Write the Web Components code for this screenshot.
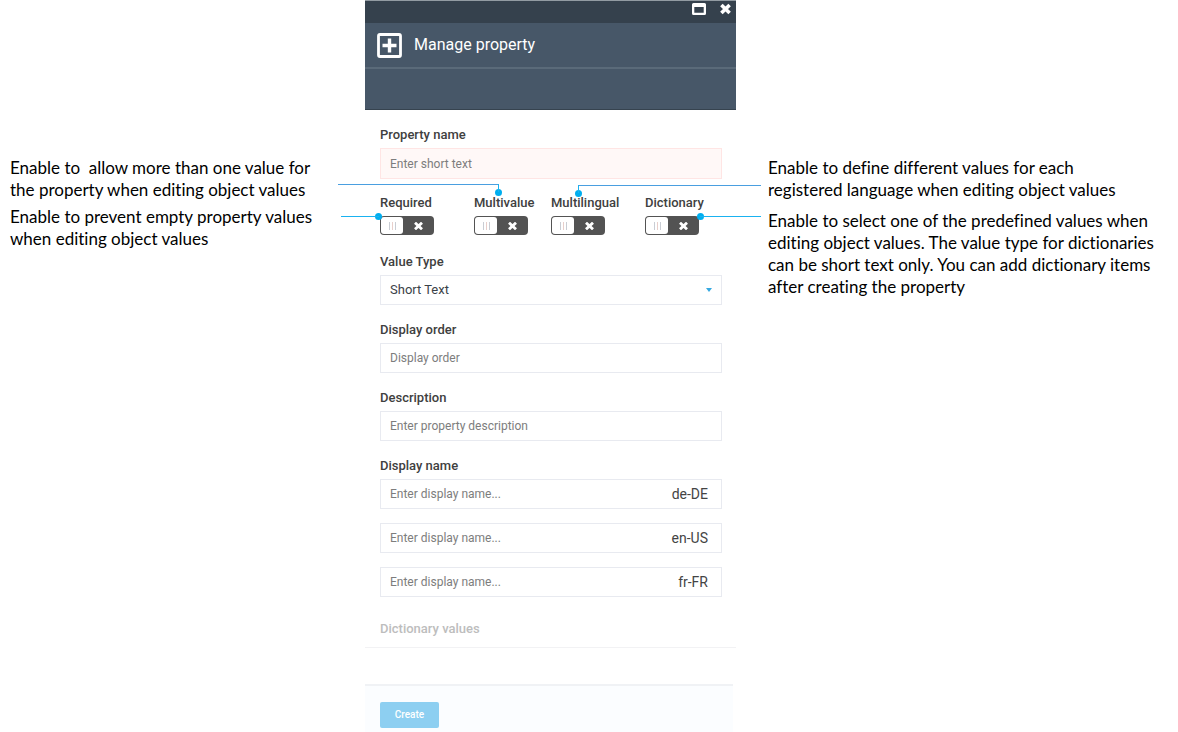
<!DOCTYPE html>
<html lang="en">
<head>
<meta charset="utf-8">
<title>Manage property</title>
<style>
  body { margin: 0; background: #fff; color: #000; font-family: Roboto, "Liberation Sans", sans-serif; }
</style>
</head>
<body>
<property-guide></property-guide>
<script>
function define(name, html, setup) {
  const template = document.createElement('template');
  template.innerHTML = html;
  customElements.define(name, class extends HTMLElement {
    constructor() {
      super();
      this.attachShadow({ mode: 'open' }).append(template.content.cloneNode(true));
    }
    connectedCallback() { if (setup) setup(this, this.shadowRoot); }
  });
}

/* A paragraph of explanatory text beside the panel */
define('guide-note', `
  <style>
    :host { display: block; font: 17px/22px Lato, "Liberation Sans", sans-serif; font-variant-ligatures: none; color: #000; }
    p { margin: 0; white-space: pre; }
  </style>
  <p><slot></slot></p>`);

/* Leader line: a dot with a rule running to the left or right */
define('leader-line', `
  <style>
    :host { position: absolute; width: 7px; height: 7px; border-radius: 50%; background: #00aeef; pointer-events: none; }
    i { position: absolute; background: #1ab2f0; }
    .h { height: 1px; top: 3px; width: var(--run); }
    .v { display: none; width: 1px; height: 8px; left: 3px; bottom: 4px; }
    :host([side=left]) .h { right: 3px; }
    :host([side=right]) .h { left: 3px; }
    :host([raised]) .h { top: -5px; background: #4a9fe0; }
    :host([raised]) .v { display: block; }
  </style>
  <i class="h"></i><i class="v"></i>`);

define('panel-header', `
  <style>
    :host { display: block; color: #fff; background: #475768; border-bottom: 1px solid #36434f; }
    .bar { display: flex; justify-content: flex-end; align-items: flex-start; gap: 14px; box-sizing: border-box;
      height: 23px; padding: 2px 5px 0 0; background: #35414d; border-top: 1px solid #929ba2; }
    button { display: block; border: 0; padding: 0; margin: 0; background: none; color: inherit; }
    svg { display: block; }
    .title { display: flex; align-items: center; gap: 12px; height: 44px; padding-left: 12px; border-bottom: 2px solid #5a6a79; }
    h1 { margin: 0; font-size: 16px; line-height: 24px; font-weight: 400; }
    .tools { height: 40px; }
  </style>
  <div class="bar">
    <button aria-label="Maximize"><svg width="14" height="12" viewBox="0 0 14 12"><path fill="#fff" fill-rule="evenodd" d="M1.500 0h11A1.500 1.500 0 0 1 14 1.500v9A1.500 1.500 0 0 1 12.500 12h-11A1.500 1.500 0 0 1 0 10.500v-9A1.500 1.500 0 0 1 1.500 0zM2.300 4v5.800h9.400V4z"/></svg></button>
    <button aria-label="Close"><svg width="11" height="12" viewBox="0 0 11 12"><path stroke="#fff" stroke-width="3.600" d="M1.400 1.900l8.200 8.200M9.600 1.900l-8.200 8.200"/></svg></button>
  </div>
  <div class="title">
    <svg width="25" height="25" viewBox="0 0 25 25"><rect x="1.500" y="1.500" width="22" height="22" rx="1.500" fill="none" stroke="#fff" stroke-width="2.800"/><path d="M12.500 5.500v14M5.500 12.500h14" stroke="#fff" stroke-width="3.400"/></svg>
    <h1><slot></slot></h1>
  </div>
  <div class="tools"></div>`);

define('text-field', `
  <style>
    :host { display: block; }
    label { display: block; margin-bottom: 4px; font-size: 13px; line-height: 18px; font-weight: 500; color: #404040; }
    label[hidden] { display: none; }
    .box { display: flex; align-items: center; box-sizing: border-box; height: 30px; padding: 0 13px 0 9px; border: 1px solid #e8eaf0; background: #fff; }
    :host([invalid]) .box { border-color: #ffe5e4; background: #fff8f7; height: 31px; }
    input { flex: 1; min-width: 0; padding: 0; border: 0; outline: 0; background: none; font: 12px/18px Roboto, sans-serif; color: #333; }
    input::placeholder { color: #7d7d7d; opacity: 1; }
    ::slotted(span) { font-size: 14px; line-height: 18px; color: #444; }
  </style>
  <label for="f"></label>
  <div class="box"><input id="f" type="text"><slot></slot></div>`,
  (host, root) => {
    const label = root.querySelector('label'), input = root.querySelector('input');
    label.textContent = host.getAttribute('label') || '';
    label.hidden = !label.textContent;
    input.placeholder = host.getAttribute('placeholder');
    if (label.hidden) input.setAttribute('aria-label', 'Display name ' + host.textContent);
  });

define('select-field', `
  <style>
    :host { display: block; }
    label { display: block; margin-bottom: 4px; font-size: 13px; line-height: 18px; font-weight: 500; color: #404040; }
    .box { display: flex; align-items: center; box-sizing: border-box; height: 30px; padding: 0 9px; border: 1px solid #e8eaf0; background: #fff; }
    select { flex: 1; appearance: none; padding: 0; border: 0; outline: 0; background: none; font: 13px/18px Roboto, sans-serif; color: #3b4248; }
    svg { display: block; }
  </style>
  <label for="f"></label>
  <div class="box"><select id="f"><option>Short Text</option></select><svg width="6" height="4" viewBox="0 0 6 4"><path d="M0 0h6L3 4z" fill="#36a9e1"/></svg></div>`,
  (host, root) => { root.querySelector('label').textContent = host.getAttribute('label'); });

define('toggle-field', `
  <style>
    :host { display: block; position: relative; }
    label { display: block; margin-bottom: 4px; font-size: 13px; line-height: 18px; font-weight: 500; color: #404040; white-space: nowrap; }
    .switch { display: grid; grid-template-columns: 24px 30px; width: 54px; height: 19px; align-items: center; justify-items: center; }
    input { grid-area: 1 / 1 / 2 / 3; appearance: none; box-sizing: border-box; width: 54px; height: 19px; margin: 0; border-radius: 4px; background: #535353; }
    .knob { grid-area: 1 / 1; box-sizing: border-box; width: 22px; height: 17px; border-radius: 3px; background: #fff; display: flex; align-items: center; justify-content: center; gap: 2px; pointer-events: none; }
    .knob i { width: 1px; height: 8px; background: #c9cdd4; }
    .knob i:nth-child(2) { background: #e8cfcb; }
    svg { grid-area: 1 / 2; pointer-events: none; margin-right: 2px; }
  </style>
  <label for="f"></label>
  <div class="switch">
    <input id="f" type="checkbox">
    <span class="knob"><i></i><i></i><i></i></span>
    <svg width="9" height="8" viewBox="0 0 9 8"><path stroke="#fff" stroke-width="2.800" d="M1 .7l7 6.600M8 .7L1 7.300"/></svg>
  </div>
  <slot></slot>`,
  (host, root) => { root.querySelector('label').textContent = host.getAttribute('label'); });

define('property-panel', `
  <style>
    :host { display: block; }
    .form { display: grid; padding: 16px 14px 0 15px; }
    .toggles { display: grid; grid-template-columns: 94fr 77fr 94fr 77fr; margin: 15px 0 18px; }
    .stack { display: grid; gap: 16px; }
    .names { display: grid; gap: 14px; }
    leader-line.required { left: -5px; top: 19px; --run: 38px; }
    leader-line.multivalue { left: 21px; top: -5px; --run: 161px; }
    leader-line.multilingual { left: 24px; top: -4px; --run: 183px; }
    leader-line.dictionary { left: 52px; top: 19px; --run: 61px; }
    h2 { margin: 0; padding: 23px 15px 9px; font-size: 13px; line-height: 18px; font-weight: 500; color: #bdbdbd; border-bottom: 1px solid #f2f2f4; }
    footer { margin: 36px 3px 0 0; padding: 16px 15px 4px; border-top: 2px solid #f0f2f5; background: #fbfdff; }
    footer button { display: block; box-sizing: border-box; width: 59px; height: 26px; padding: 0; border: 0; border-radius: 2px; background: #8dcff1; color: #fff; font: 500 10px/26px Roboto, sans-serif; }
  </style>
  <panel-header>Manage property</panel-header>
  <div class="form">
    <text-field label="Property name" placeholder="Enter short text" invalid></text-field>
    <div class="toggles">
      <toggle-field label="Required"><leader-line class="required" side="left"></leader-line></toggle-field>
      <toggle-field label="Multivalue"><leader-line class="multivalue" side="left" raised></leader-line></toggle-field>
      <toggle-field label="Multilingual"><leader-line class="multilingual" side="right" raised></leader-line></toggle-field>
      <toggle-field label="Dictionary"><leader-line class="dictionary" side="right"></leader-line></toggle-field>
    </div>
    <div class="stack">
      <select-field label="Value Type"></select-field>
      <text-field label="Display order" placeholder="Display order"></text-field>
      <text-field label="Description" placeholder="Enter property description"></text-field>
      <div class="names">
        <text-field label="Display name" placeholder="Enter display name..."><span>de-DE</span></text-field>
        <text-field placeholder="Enter display name..."><span>en-US</span></text-field>
        <text-field placeholder="Enter display name..."><span>fr-FR</span></text-field>
      </div>
    </div>
  </div>
  <h2>Dictionary values</h2>
  <footer><button type="button">Create</button></footer>`);

define('property-guide', `
  <style>
    :host { display: grid; grid-template-columns: 365fr 371fr 442fr; align-items: start; }
    aside { display: grid; padding: 157px 0 0 10px; gap: 5px; }
    .right { padding-left: 32px; gap: 9px; }
  </style>
  <aside>
    <guide-note>Enable to  allow more than one value for<br>the property when editing object values</guide-note>
    <guide-note>Enable to prevent empty property values<br>when editing object values</guide-note>
  </aside>
  <property-panel></property-panel>
  <aside class="right">
    <guide-note>Enable to define different values for each<br>registered language when editing object values</guide-note>
    <guide-note>Enable to select one of the predefined values when<br>editing object values. The value type for dictionaries<br>can be short text only. You can add dictionary items<br>after creating the property</guide-note>
  </aside>`);
</script>
</body>
</html>
